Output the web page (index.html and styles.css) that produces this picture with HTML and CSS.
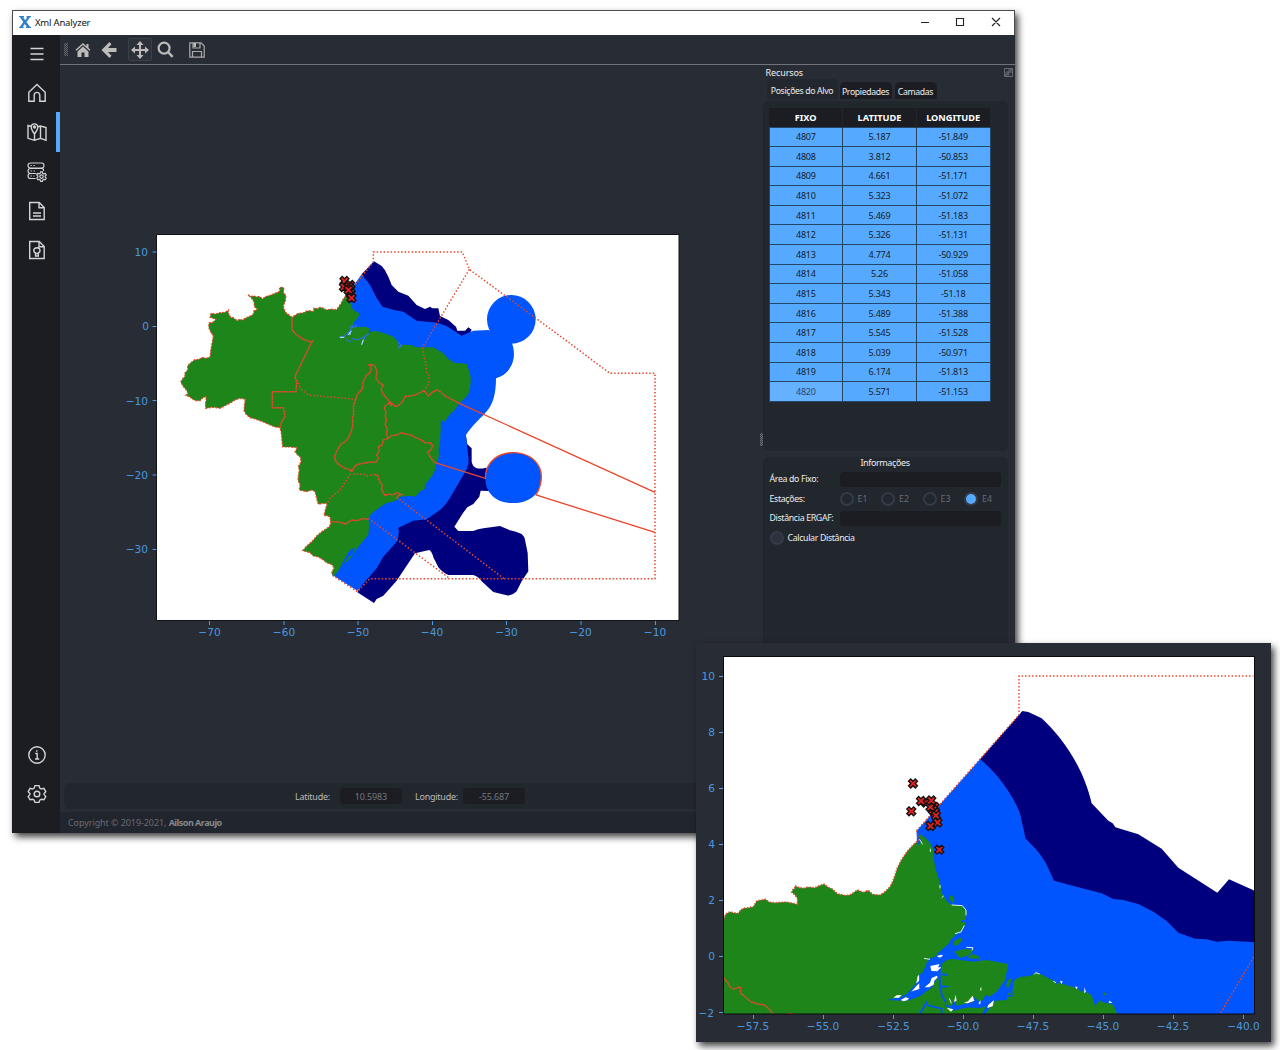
FILE: index.html
```html
<!DOCTYPE html>
<html lang="pt-BR">
<head>
<meta charset="utf-8">
<title>Xml Analyzer</title>
<link rel="stylesheet" href="styles.css">
</head>
<body>
<main class="desktop">
<section class="window">
  <header class="titlebar">
    <svg class="logo" viewBox="0 0 12 12"><path d="M0 0h5v1l-.8.2L6.200 4.200 8.200 1.200 7.500 1V0H12v1l-1 .3L7.500 6l3.500 4.700 1 .3v1H7v-1l.7-.2-1.900-2.900-2 2.900.8.200v1H0v-1l1-.3L4.300 6 1 1.300 0 1z" fill="#2f80c9"/></svg>
    <h1>Xml Analyzer</h1>
    <svg class="controls" viewBox="0 0 78 12"><path d="M0 6.500h8M35.500 2.500h7v7h-7zM71 2l8 8M79 2l-8 8" fill="none" stroke="#222" stroke-width="1.100"/></svg>
  </header>
  <div class="body">
    <nav class="sidebar">
      <a><svg viewBox="0 0 20 20"><path d="M3.500 4.500h13M3.500 10h13M3.500 15.500h13"/></svg></a>
      <a><svg viewBox="0 0 20 20"><path d="M1.800 9.200 10 1.500l8.200 7.700v9h-5.400v-6a2.800 2.800 0 0 0-5.600 0v6H1.800z"/></svg></a>
      <a class="active"><svg viewBox="0 0 20 20"><path d="M4.500 4.500 1 3.500v12.800l6.500 2 6-2 5.500 2V5.500l-5.500-1.500-3 1M13.500 4v12.300M7.500 12v6.300M7.500 12C5 8.500 4.200 7 4.200 5.200a3.300 3.300 0 0 1 6.600 0C10.800 7 10 8.500 7.500 12z"/><circle cx="7.500" cy="5" r="1"/></svg></a>
      <a><svg class="fine" viewBox="0 0 20 20"><rect x="1" y="1" width="16" height="5" rx="2.500"/><path d="M15 6.200q2 .5 1.500 2.800M9.500 11.500h-6a2.400 2.400 0 0 1 0-5H15M8.500 16.500h-5a2.400 2.400 0 0 1 0-5"/><path d="M3.500 3.500h1.300M6.500 3.500h1.300M3.500 9h1.300M6.500 9h1.300M3.500 14h1.300M6.500 14h1"/><path d="m13.600 9.800h1.800l.4 1.500 1 .5 1.500-.4.9 1.600-1 1v1.200l1 1-.9 1.500-1.500-.3-1 .6-.4 1.400h-1.800l-.4-1.400-1-.6-1.500.3-.9-1.500 1-1V14l-1-1 .9-1.600 1.500.4 1-.5z"/><circle cx="14.500" cy="14.600" r="1.700"/></svg></a>
      <a><svg viewBox="0 0 20 20"><path d="M2.700 1.500h9.500l5 5v12H2.700zM12 1.500v5.200h5.200M6 12h8M6 15h8"/></svg></a>
      <a><svg viewBox="0 0 20 20"><path d="M2.700 1.500h9.500l5 5v12H2.700zM12 1.500v5.200h5.200M8.500 13c-2.800-1.400-2-5.300 1.400-5.300s4.200 3.900 1.400 5.300v3H8.500zM8.500 13.500h3"/></svg></a>
      <a class="bottom"><svg viewBox="0 0 20 20"><circle cx="10" cy="10" r="8.200"/><path d="M8.200 8.500h2v5.300M8 14h4.200M9.800 5.300v1.400"/></svg></a>
      <a><svg viewBox="0 0 20 20"><path d="M8 1.600h4l.8 2.500 1.500.9 2.600-.6 1.900 3.300-1.700 1.900v1l1.700 1.900-1.900 3.300-2.600-.6-1.500.9-.8 2.300H8l-.8-2.300-1.500-.9-2.600.6-1.900-3.300 1.700-1.900v-1L1.200 7.700l1.900-3.300 2.600.6 1.500-.9z"/><circle cx="10" cy="10" r="2.800"/></svg></a>
    </nav>
    <div class="work">
      <div class="toolbar">
        <i class="grip"></i>
        <svg viewBox="0 0 16 16"><path d="M8 1 .5 7.800l1 1L8 3l6.500 5.800 1-1L13.500 6V2h-2v2.200z"/><path d="m8 4.500-5.500 5V15h4v-4.500h3V15h4V9.500z"/></svg>
        <svg class="back" viewBox="0 0 16 16"><path d="M8.500 0 .5 8l8 8 2-2.200L7 10h8.500V6H7l3.500-3.800z"/></svg>
        <span class="tool"><svg viewBox="0 0 18 18"><path d="m9 0 3.500 4H10v4h4V5.500L18 9l-4 3.500V10h-4v4h2.500L9 18l-3.500-4H8v-4H4v2.500L0 9l4-3.500V8h4V4H5.500z"/></svg></span>
        <svg class="search" viewBox="0 0 18 18"><circle cx="7.500" cy="7.500" r="5.800" fill="none" stroke="#bdbcbb" stroke-width="2.300"/><path d="m10.800 12.500 1.700-1.700 5 5-1.900 1.900z"/></svg>
        <svg class="save" viewBox="0 0 16 16"><path d="M.8.800H12l3.200 3.200v11.200H.8zM4 1v5h7V1M3.500 15V9.500h9V15" fill="none" stroke="#aaa" stroke-width="1.200"/><path d="M4.500 1H7v4H4.500z"/></svg>
      </div>
      <div class="content">
        <svg class="plot" viewBox="60 65 695 710">
          <rect x="157" y="235" width="522" height="386" fill="#fff"/>
          <g transform="translate(120 230) scale(.33333)">
            <path class="deep" d="M725 133 762 94l23 14 10 13 10 19 10 25 20 20 30 12 25 28 25 12 15-7 7 5 18 0 5 23 25 12 23 20 4 12h23l10-10 10 7-20 40H850z"/>
            <path class="deep" d="M1038 620l4 23 13 12v40q3 15 15 20 14 2 28-2l40 30-28 40-28-1-4 18-18 22-18 10-13 17-26 41 12 13h45q14-6 30-8l50-7 30 13q18 4 35 11 8 7 10 17l8 40 2 55-20 30-15 30q-14 14-30 12l-40-10-35-32q-10-15-25-19h-75q-15-5-30-23l-15-30q-4-17-12-22l-43 10-25 37-30 45-40 45-20 10-8 12-50-32 80-150z"/>
            <path class="shelf" d="M680 196 725 133l25 32 20 40 18 25q30 10 62 15l40 27 60 6 30 10 45 29 35-15 46-2 70 40c15 40 0 90-48 105 0 45-8 80-33 105-18 20-38 36-57 65l7 68q4 20-10 44l-40 68q-15 28-35 45l-40 28-40 4-45 21q4 25-5 42l-40 45-20 35-58 67-76-48 104-177V500z"/>
            <circle class="shelf" cx="1174" cy="268" r="73"/>
            <circle class="shelf" cx="1110" cy="375" r="71"/>
            <path class="shelf" d="M1096 745c0-105 170-100 168-2 0 55-45 77-84 76-46 2-84-25-84-74z"/>
            <path class="land" d="M182 456 188 446 195 439 194 430 203 420 203 407 212 398 224 389 237 388 247 382 257 385 270 381 272 362 275 345 280 318 273 308 266 292 267 279 278 277 288 268 270 262 273 250 287 252 300 248 315 247 326 240 325 249 332 262 340 263 352 272 358 268 368 270 375 265 385 260 393 257 400 252 402 242 412 238 403 230 402 216 395 205 383 194 393 199 401 198 410 200 420 200 428 207 435 200 450 196 465 190 475 186 481 180 477 174 488 171 492 177 490 187 498 197 496 213 491 225 491 235 498 248 516 262 526 255 535 250 548 249 560 243 571 242 580 245 582 234 592 236 600 232 609 234 620 240 632 237 650 239 656 230 662 222 671 205 680 195 688 210 693 224 697 236 706 244 716 248 717 256 713 265 702 276 700 285 705 290 720 291 736 290 748 295 747 306 743 315 752 305 765 302 780 306 800 312 820 320 830 331 835 340 838 358 841 345 855 344 872 345 890 352 908 352 940 352 955 361 970 370 985 387 1005 399 1023 400 1040 402 1047 422 1052 440 1052 455 1050 475 1046 490 1035 505 1018 520 1002 542 992 550 979 568 975 575 967 571 962 578 962 600 961 620 960 640 956 655 957 675 954 690 949 698 945 720 938 735 928 748 915 765 914 778 900 784 892 794 885 800 868 797 840 801 830 810 818 815 800 819 782 830 768 841 755 850 745 865 748 885 745 915 736 925 725 938 715 950 705 965 695 980 680 995 665 1005 655 1022 640 1040 635 1030 638 1020 643 1015 636 1004 620 998 610 990 595 981 580 978 570 968 548 962 560 948 575 935 590 918 605 905 628 890 632 880 630 862 622 857 612 857 616 839 621 822 612 820 595 823 591 810 588 797 585 785 575 780 560 785 538 780 540 765 534 750 535 735 538 720 535 710 543 695 541 682 533 675 525 665 532 653 510 651 488 651 486 635 485 620 483 605 480 593 465 591 450 585 430 576 405 567 390 563 378 553 372 542 373 525 376 508 360 505 345 510 330 520 315 527 300 535 280 532 257 535 256 523 258 510 258 500 248 504 240 512 227 512 218 508 208 500 197 496 204 491 199 480 190 470z"/>
            <path d="M665 1004l15-25 5-10 8-10 10-3-5 16-13 8-17 22M688 964l8-3" fill="#0055ff" stroke="#0055ff" stroke-width="3"/>
            <path d="M656 322l18-4 16-15 8-18M688 290l14 2 10-6M696 298l-10 20M696 325l16 5 18-8 16-10M736 318l-12 28M678 328l14 8M834 335l8 10-7 10 12-9" fill="none" stroke="#2b72e8" stroke-width="3.500"/>
            <path d="M660 322h13M684 315l10-12M690 307v7M730 329l-5 15" fill="none" stroke="#cdf0f4" stroke-width="3"/>
            <g class="border">
              <path class="west" d="M182 456 188 446 195 439 194 430 203 420 203 407 212 398 224 389 237 388 247 382 257 385 270 381 272 362 275 345 280 318 273 308 266 292 267 279 278 277 288 268 270 262 273 250 287 252 300 248 315 247 326 240 325 249 332 262 340 263 352 272 358 268 368 270 375 265 385 260 393 257 400 252 402 242 412 238 403 230 402 216 395 205 383 194 393 199 401 198 410 200 420 200 428 207 435 200 450 196 465 190 475 186 481 180 477 174 488 171 492 177 490 187 498 197 496 213 491 225 491 235 498 248 516 262 526 255 535 250 548 249 560 243 571 242 580 245 582 234 592 236 600 232 609 234 620 240 632 237 650 239 656 230 662 222 671 205 680 195"/>
              <path class="west" d="M635 1030 638 1020 643 1015 636 1004 620 998 610 990 595 981 580 978 570 968 548 962 560 948 575 935 590 918 605 905 628 890 632 880 630 862 622 857 612 857 616 839 621 822 612 820 595 823 591 810 588 797 585 785 575 780 560 785 538 780 540 765 534 750 535 735 538 720 535 710 543 695 541 682 533 675 525 665 532 653 510 651 488 651 486 635 485 620 483 605 480 593 465 591 450 585 430 576 405 567 390 563 378 553 372 542 373 525 376 508 360 505 345 510 330 520 315 527 300 535 280 532 257 535 256 523 258 510 258 500 248 504 240 512 227 512 218 508 208 500 197 496 204 491 199 480 190 470 182 456"/>
              <path class="state" d="M516 262v38l14 15 20 13 22 8 5-2-5 8-47 98 5 20-2 25h-71v48h33l5 27-10 15-5 18"/>
              <path d="M525 440l20 40 20 15 142 13"/>
              <path class="state" d="M707 508 711 495 728 475 729 457 738 438 750 427 754 415 752 407 745 405 757 403 766 410 771 425 768 444 776 457 790 465 783 478 788 490 797 502 808 514 818 522 826 530 836 526 845 518 852 507 856 499 870 498 886 495 900 488 912 482 925 498 936 487 950 480 960 484 968 493 985 503 1018 520M707 508 700 528 701 550 697 565 699 580 696 598 685 625 675 635 662 643 652 660 644 678 645 690 655 703 670 712 695 722 704 710 713 703 735 699 752 696 768 697 775 685 770 674 778 663 775 650 786 645 790 630 805 625 815 617 830 615 845 607 855 612 870 614 885 622 900 628 915 638 930 638 938 647 934 658 924 665 930 680 943 697"/>
              <path class="state" d="M805 625 799 612 802 597 795 582 800 570 796 558 798 546 793 536 795 528 808 518 815 528M805 518 818 522"/>
              <path class="state" d="M765 735 773 735 778 752 787 765 785 778 795 797 808 792 816 795 832 788 845 794 832 798 832 808M630 875 655 876 678 882 695 870 712 872 728 866 745 867"/>
              <path d="M695 722l5 10h30l10 6 30-6M695 722l-10 20-25 38-30 25-10 17"/>
              <path d="M680 196 760 96V66h267l21 52 302 222 70 53 50 37h135v616H750l-38 39-76-50M1048 118 908 352l3 25 7 25 2 25 8 10-2 26-16 20M830 802l322 244M745 865l245 181"/>
              <path class="solid" d="M1018 520l587 267M943 697l153 48c0-105 170-100 168-2q-2 30-16 52l357 112"/>
            </g>
          </g>
          <g class="marks">
            <use href="#mark" x="344.500" y="281"/><use href="#mark" x="344" y="287"/><use href="#mark" x="350" y="285"/><use href="#mark" x="349" y="287"/><use href="#mark" x="350.500" y="289"/><use href="#mark" x="350.500" y="293.500"/><use href="#mark" x="348.500" y="290"/><use href="#mark" x="351.500" y="298"/>
          </g>
          <path d="M156.500 234.500h522.500v386H156.500z" fill="none" stroke="#111318"/>
          <path class="ticks" d="M152.500 252h4M152.500 326.500h4M152.500 400.500h4M152.500 475h4M152.500 549.500h4M209.500 621v4M284 621v4M358 621v4M432.500 621v4M506.500 621v4M581 621v4M655.500 621v4"/>
          <g class="axis-y"><text x="148" y="256">10</text><text x="149" y="330">0</text><text x="148" y="404.500">−10</text><text x="148" y="479">−20</text><text x="148" y="553">−30</text></g>
          <g class="axis-x"><text x="209.500" y="636">−70</text><text x="284" y="636">−60</text><text x="358" y="636">−50</text><text x="432" y="636">−40</text><text x="506.500" y="636">−30</text><text x="580.500" y="636">−20</text><text x="655" y="636">−10</text></g>
        </svg>
        <i class="splitter"></i>
        <aside class="dock">
          <div class="dock-title"><span>Recursos</span><svg viewBox="0 0 9 9"><path d="M.5.500h8v8h-8zM2 4h3v3H2zM4 2h3v3M1 8l7-7" fill="none" stroke="#777b80" stroke-width=".8"/></svg></div>
          <div class="tabs"><span class="selected">Posições do Alvo</span><span>Propiedades</span><span>Camadas</span></div>
          <div class="pane">
            <table>
              <thead><tr><th>FIXO</th><th>LATITUDE</th><th>LONGITUDE</th></tr></thead>
              <tbody>
              <tr><td>4807</td><td>5.187</td><td>-51.849</td></tr>
              <tr><td>4808</td><td>3.812</td><td>-50.853</td></tr>
              <tr><td>4809</td><td>4.661</td><td>-51.171</td></tr>
              <tr><td>4810</td><td>5.323</td><td>-51.072</td></tr>
              <tr><td>4811</td><td>5.469</td><td>-51.183</td></tr>
              <tr><td>4812</td><td>5.326</td><td>-51.131</td></tr>
              <tr><td>4813</td><td>4.774</td><td>-50.929</td></tr>
              <tr><td>4814</td><td>5.26</td><td>-51.058</td></tr>
              <tr><td>4815</td><td>5.343</td><td>-51.18</td></tr>
              <tr><td>4816</td><td>5.489</td><td>-51.388</td></tr>
              <tr><td>4817</td><td>5.545</td><td>-51.528</td></tr>
              <tr><td>4818</td><td>5.039</td><td>-50.971</td></tr>
              <tr><td>4819</td><td>6.174</td><td>-51.813</td></tr>
              <tr><td class="current">4820</td><td>5.571</td><td>-51.153</td></tr>
              </tbody>
            </table>
          </div>
          <div class="info">
            <h2>Informações</h2>
            <div class="field"><label>Área do Fixo:</label><span class="input"></span></div>
            <div class="field"><label>Estações:</label><div class="radios"><span><i></i>E1</span><span><i></i>E2</span><span><i></i>E3</span><span><i class="on"></i>E4</span></div></div>
            <div class="field"><label>Distância ERGAF:</label><span class="input"></span></div>
            <div class="field calc"><i></i><label>Calcular Distância</label></div>
          </div>
        </aside>
      </div>
      <div class="coords"><label>Latitude:</label><span>10.5983</span><label>Longitude:</label><span>-55.687</span></div>
      <footer>Copyright © 2019-2021,&nbsp;<b>Ailson Araujo</b></footer>
    </div>
  </div>
</section>

<section class="detail">
  <svg viewBox="696 643 575 399">
    <defs>
      <path id="mark" d="M-2.300-4.500 0-2.200l2.300-2.300 2.200 2.200L2.200 0l2.300 2.300-2.200 2.200L0 2.200l-2.300 2.300-2.200-2.200L-2.200 0l-2.300-2.300z"/>
      <clipPath id="frame"><path d="M101 50h1593v1072H101z"/></clipPath>
    </defs>
    <rect x="724" y="657" width="530.500" height="357" fill="#fff"/>
    <g transform="translate(690 640) scale(.33333)">
      <g clip-path="url(#frame)">
        <path class="deep" d="M870 358 997 213l18 3 40 19c60 55 125 145 150 255l50 52 13 8 8 12 69 21 70 43 50 57 117 75 35-40 77 34v250H1000z"/>
        <path class="shelf" d="M680 572 870 358c60 45 120 140 124 182q8 30 12 55l34 35q16 20 28 40l24 52 73 20 70 18 35 17 30 3 45 12 45 23 40 28 35 35 50 18 35 2 30 7 35-3 79 5v215H592v-45l96-30z"/>
        <path class="land" d="M101 1122V838L107 822 120 815 130 818 145 820 151 811 160 805 175 803 190 800 200 783 212 780 227 778 237 786 255 788 270 787 290 786 306 789 322 793 322 775 314 764 305 757 309 748 315 745 314 737 326 742 340 745 354 741 375 743 385 738 402 732 415 742 427 747 442 761 465 766 480 765 492 757 502 750 520 757 535 751 548 763 570 765 585 755 600 740 609 722 615 705 622 683 634 660 652 633 672 612 686 600 688 582C706 590 722 606 729 628L732 660 736 685 749 725 757 762 772 785 785 795 803 795 820 801 829 815 827 840 823 862 813 875 800 882 782 899 772 920 745 938 735 955 710 968 700 995 683 1008 677 1040 658 1058 650 1072 620 1073 592 1080 650 1083 690 1068 728 1040 740 1010 750 1035 755 1070 772 1096 790 1112 830 1102 870 1098 888 1100 876 1122z"/>
        <path class="land" d="M757 970q12-13 33-13l60 8 40-5 65 12-10 48-25 35-22 15-12-6-7 17-14 2-12-12-3 15-50 11-8-18-7 22-5 6-25-11-11-30-2-30zM885 1122l30-40 35-2 5-22 12-2 5-36 20-10 30-3 16-9 22 8 40 21 50 14 40 17 15 7 10 32 15-16 8 5 32 8 12 29zM948 1040l4-18 15-10-10 30zM778 765l10 3 5 15-5 6-9-10zM792 902l20-9 6 6-15 17-10 2zM792 935l30-8 28 2-10 15-30 10zM832 950l18-8 18 8 3 8-25 3zM1238 1063l7-7 5 8-7 2z"/>
        <path d="M683 578l4 30 5-10M713 962l24-10 18-12-27 35-12 25-38 35-24 28-20 10M728 970l-3 35 15-3-15 35-40 30-28 8M745 942l36-32 20-20 18-20M700 1000l20-5M690 1120l20-32 3 8 42 10v15M765 1095l25 10 35-6 45 2 20-8 35-24 16-6v12M940 1070l28-4M783 903l-8 25M787 920v25M755 960q-12 50 0 105l12 22M755 1003l18 2M755 1040h20M740 955q40-8 75 3h50M815 843h12M824 860v25" fill="none" stroke="#0055ff" stroke-width="5.500"/>
        <path d="M610 1073l10-7 15-1-8 8zM632 1080l15-8 10 3-5 6-12 3zM721 978l28-6-5 10h10l-12 12-18-1zM740 948l15-4 4 3-10 6zM704 1042l16-14 5-14 16-7 2 5-10 10-2 12-14 8zM822 1088l12-4 14-17 5 15-20 8zM894 1096l18-16-4 19-16 5zM770 1103l20 5-7 7zM1110 1022l4 10 4-8zM1155 1040l5 8 3-8zM1183 1042v18l5-5zM1258 1082l10 7-12-1zM865 1090l7-9-1 12zM800 1082l-3-18-5 22zM870 1048l4-8v14z" fill="#fff"/>
        <path d="M785 795l32 2 11 13v16M795 881l18-5 10-20M829 922l20 1-3 8M702 955l18 3M688 597l10 16M721 626v10M784 1090l-6-15M755 773l6-5M750 735v10M1033 1003l4-5 12 4M1090 1024l10 5" fill="none" stroke="#dcefe4" stroke-width="3"/>
        <path d="M1000 1012v-8M1012 1010v-6M1062 1010v-8M1078 1018v-8M1098 1032l5-12M1128 1036l2-12M1144 1040l3-9M1172 1055l2-12M1205 1068l8-6 4 14M1225 1074l8-10M1248 1082l6-14M955 1055l14 6M965 1025l12-8" fill="none" stroke="#0055ff" stroke-width="4"/>
        <g class="border">
          <path d="M680 572 987 225V108h703M1691 952 1590 1122"/>
          <path class="state" d="M101 1013l12 15 8 14 12 5 18-7 1 20 10 7 20 18 25 8 15 1 12 10 16 18M290 1121h19"/>
          <path class="coast-dots" d="M101 838 107 822 120 815 130 818 145 820 151 811 160 805 175 803 190 800 200 783 212 780 227 778 237 786 255 788 270 787 290 786 306 789 322 793 322 775 314 764 305 757 309 748 315 745 314 737 326 742 340 745 354 741 375 743 385 738 402 732 415 742 427 747 442 761 465 766 480 765 492 757 502 750 520 757 535 751 548 763 570 765 585 755 600 740 609 722 615 705 622 683 634 660 652 633 672 612 686 600 680 572"/>
        </g>
      </g>
    </g>
    <path d="M723.500 656.500h531v357.500h-531z" fill="none" stroke="#08090b"/>
    <g class="marks">
      <use href="#mark" x="913" y="783.500"/><use href="#mark" x="911.300" y="811.300"/><use href="#mark" x="926" y="802.500"/><use href="#mark" x="921" y="801"/><use href="#mark" x="934.500" y="807"/><use href="#mark" x="933" y="810"/><use href="#mark" x="935" y="812.500"/><use href="#mark" x="930.500" y="807"/><use href="#mark" x="931.300" y="800.500"/><use href="#mark" x="936" y="815.500"/><use href="#mark" x="937.500" y="822.500"/><use href="#mark" x="930.500" y="826"/><use href="#mark" x="939.300" y="849.700"/>
    </g>
    <path class="ticks" d="M719 676.500h4M719 732.500h4M719 788.500h4M719 844.500h4M719 900.500h4M719 956.500h4M719 1012.500h4M753.500 1015v4M823.500 1015v4M893.500 1015v4M963.500 1015v4M1033.500 1015v4M1103.500 1015v4M1173.500 1015v4M1243.500 1015v4"/>
    <g class="axis-y"><text x="715" y="680.200">10</text><text x="715" y="736">8</text><text x="715" y="792">6</text><text x="715" y="848">4</text><text x="715" y="904">2</text><text x="715" y="960">0</text><text x="714" y="1016.500">−2</text></g>
    <g class="axis-x"><text x="753" y="1030">−57.5</text><text x="823" y="1030">−55.0</text><text x="893.500" y="1030">−52.5</text><text x="963" y="1030">−50.0</text><text x="1033" y="1030">−47.5</text><text x="1103" y="1030">−45.0</text><text x="1173" y="1030">−42.5</text><text x="1243.500" y="1030">−40.0</text></g>
  </svg>
</section>
</main>
</body>
</html>
```
FILE: styles.css
```css
* { box-sizing: border-box; }
body { margin: 0; background: #fff; font: 9px "Noto Sans", "Open Sans", sans-serif; color: #ddd; }
svg { display: block; flex: none; }
.desktop { position: relative; width: 1280px; height: 1050px; overflow: hidden; }
.window { position: absolute; left: 12px; top: 10px; width: 1003px; height: 823px; display: flex; flex-direction: column; background: #282c34; box-shadow: 3px 4px 7px rgba(0,0,0,.75); }
.titlebar { height: 25px; flex: none; display: flex; align-items: center; background: #fff; border: 1px solid #4b4b4b; border-bottom: 0; padding: 0 15px 2px 6px; }
.logo { width: 12px; height: 12px; }
.titlebar h1 { margin: 0 auto 0 4px; font: 9.5px "Noto Sans", sans-serif; letter-spacing: -.2px; color: #111; }
.controls { width: 78px; height: 12px; overflow: visible; }
.body { flex: 1; display: flex; min-height: 0; }
.sidebar { width: 48px; background: #1b1d23; display: flex; flex-direction: column; }
.sidebar a { height: 39.2px; display: flex; align-items: center; justify-content: center; padding: 0 0 1px 2px; }
.sidebar a:first-child { padding-bottom: 2px; }
.sidebar .active { border-right: 4px solid #55aaff; padding: 0 0 0 6px; margin-top: -1px; margin-bottom: 1px; }
.sidebar .bottom { margin-top: auto; }
.sidebar a:last-child { margin-bottom: 18.5px; }
.sidebar svg { width: 20px; height: 20px; fill: none; stroke: #d4d4d5; stroke-width: 1.4; }
.sidebar .fine { stroke-width: 1.15; }
.work { flex: 1; display: flex; flex-direction: column; min-width: 0; }
.toolbar { height: 30px; flex: none; display: flex; align-items: center; border-bottom: 1px solid #70747a; padding-left: 4px; }
.toolbar svg { width: 16px; height: 16px; fill: #bdbcbb; }
.grip { width: 4px; height: 13px; margin-right: 7px; background: repeating-conic-gradient(#62666c 0 25%, #30343b 0 50%) 0 0/2px 2px; }
.toolbar .back { margin-left: 10px; }
.tool { width: 24px; height: 23px; border: 1px solid #3b3f46; margin-left: 11px; display: flex; align-items: center; justify-content: center; border-radius: 2px; background: #2c3038; }
.toolbar .tool svg { width: 18px; height: 18px; }
.toolbar .search { width: 17px; height: 17px; margin-left: 5px; }
.toolbar .save { margin-left: 15px; }
.content { flex: 1; min-height: 0; display: flex; }
.plot { width: 695px; height: 710px; }
.splitter { width: 3px; height: 13px; flex: none; margin: 368px 0 0 4.500px; background: repeating-conic-gradient(#73777d 0 25%, #30343b 0 50%) 0 0/2px 2px; }
.dock { width: 245px; flex: none; display: flex; flex-direction: column; letter-spacing: -.35px; }
.dock-title { height: 15px; display: flex; align-items: center; justify-content: space-between; padding-left: 3px; width: 250px; letter-spacing: -.1px; color: #eee; }
.dock-title svg { width: 9px; height: 9px; }
.tabs { height: 21px; display: flex; align-items: flex-end; gap: 3px; padding: 0 0 2px 4px; }
.tabs span { height: 17px; display: flex; align-items: center; justify-content: center; background: #1b1d23; border-radius: 5px 5px 0 0; width: 52px; color: #eee; font-size: 8.7px; padding-top: 2px; }
.tabs span:last-child { width: 42px; }
.tabs .selected { width: 71px; height: 20px; background: #22262d; margin-right: -1px; padding-top: 3px; }
.pane { height: 350px; flex: none; background: #22262d; border-radius: 6px; padding: 7px 6px; }
table { width: 222px; border-collapse: collapse; table-layout: fixed; text-align: center; }
th { height: 19px; padding: 1px 0 0; background: #1b1d23; color: #fff; font-size: 9.2px; letter-spacing: 0; border-right: 1px solid #22262d; }
td { height: 19.6px; padding: 1px 0 0; line-height: 12px; background: #55aaff; color: #151c26; font-size: 9px; border: 1px solid #244668; letter-spacing: -.25px; }
.current { background: #63b1ff; color: #34475c; }
.info { flex: 1; margin-top: 6px; background: #22262d; border-radius: 6px; padding: 0 7px; }
.info h2 { margin: 0; height: 12px; font: 9px/11px "Noto Sans", sans-serif; letter-spacing: -.4px; text-align: center; color: #eee; }
.field { height: 19.6px; display: flex; align-items: center; font-size: 8.8px; color: #eee; padding-top: 1px; }
.field label { width: 70px; flex: none; white-space: nowrap; }
.input { width: 161px; height: 15px; border-radius: 4px; background: #1b1d23; }
.field i { width: 14px; height: 14px; border: 2px solid #343b48; border-radius: 50%; display: block; flex: none; }
.radios { display: flex; flex: none; color: #696d73; letter-spacing: .1px; }
.radios span { width: 41.500px; flex: none; display: flex; align-items: center; gap: 4px; }
.field .on { background: #55aaff; }
.calc i { margin-right: 4px; background: #2c313c; }
.coords { width: 945px; height: 26px; flex: none; margin: 0 4px 3px; background: #22262d; border-radius: 6px; display: flex; align-items: center; padding-left: 231px; letter-spacing: -.25px; color: #bbb; }
.coords label { width: 35px; }
.coords label:nth-of-type(2) { width: 41px; }
.coords span { width: 62px; height: 16px; line-height: 17px; text-align: center; border-radius: 4px; background: #1b1d23; color: #747880; margin: 0 13px 0 10px; letter-spacing: -.15px; }
.coords span:last-child { margin-left: 7px; }
footer { height: 21px; flex: none; display: flex; align-items: center; background: #21252d; color: #686c73; padding-left: 8px; letter-spacing: -.08px; }
footer b { color: #858990; letter-spacing: -.5px; }
.detail { position: absolute; left: 696px; top: 643px; width: 575px; height: 399px; background: #282c34; box-shadow: 3px 4px 7px rgba(0,0,0,.75); }
.detail svg { width: 575px; height: 399px; }
.deep { fill: #00007f; }
.shelf { fill: #0055ff; }
.land { fill: #1d8519; }
.border { fill: none; stroke: #e8472c; stroke-width: 4.500; stroke-dasharray: 4.500 6; }
.state { stroke-dasharray: 7 1.500; }
.west { stroke-width: 3.500; stroke-dasharray: 6 4; }
.coast-dots { stroke-dasharray: 4 5; }
.solid { stroke-dasharray: none; stroke-width: 4; }
.marks { fill: #e32020; stroke: #111; stroke-width: 1.300; }
.ticks { fill: none; stroke: #4a9bea; }
text { font: 10.6px "DejaVu Sans", sans-serif; fill: #4a97df; }
.axis-y { text-anchor: end; }
.axis-x { text-anchor: middle; }
```
